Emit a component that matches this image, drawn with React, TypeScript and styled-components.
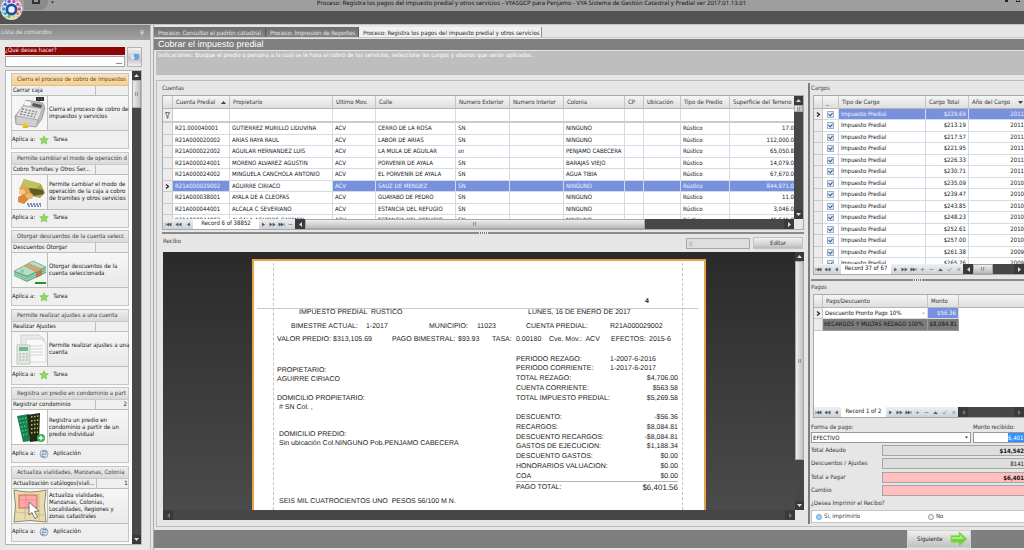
import React from 'react';
import styled, { createGlobalStyle, css } from 'styled-components';

const UI = '"DejaVu Sans Condensed", "DejaVu Sans", sans-serif';
const ARIAL = '"Liberation Sans", Arial, sans-serif';

const GlobalStyle = createGlobalStyle`
  *, *::before, *::after { box-sizing: border-box; }
  body { margin: 0; background: #e6e6e6; font: 6px/8px ${UI}; color: #141414; text-rendering: geometricPrecision; }
  button, input, select { font: inherit; color: inherit; margin: 0; padding: 0; border-radius: 0; }
  h1, h2, h3, p { margin: 0; font-weight: 400; }
  svg { display: block; flex: none; }
`;

/* ---------- window frame ---------- */
const Window = styled.div`
  display: flex; flex-direction: column; height: 100vh; min-height: 550px; overflow: hidden;
`;
const TitleBar = styled.header`
  flex: none; height: 11px; display: flex; align-items: flex-start; background: #9e9e9e; position: relative;
`;
const Orb = styled.div`position: absolute; left: 0; top: -3px; z-index: 2;`;
const QuickAccess = styled.div`
  width: 24px; height: 10px; margin-left: 24px; background: #8a8a8a; border-radius: 0 0 8px 0;
  display: flex; justify-content: center;
`;
const QuickArrow = styled.span`width: 10px; padding: 1px 0 0 3px;`;
const AppTitle = styled.h1`
  flex: 1; text-align: center; font: 6px/6px "Noto Sans", "Open Sans", sans-serif; color: #111; white-space: nowrap;
`;
const WindowButtons = styled.div`
  display: flex; gap: 8px; padding-right: 4px;
`;
const Ribbon = styled.div`flex: none; height: 13px; background: #525252;`;
const Body = styled.div`flex: 1; min-height: 0; display: flex; background: #e6e6e6; border-top: 1px solid #c4c4c4;`;

/* ---------- command dock ---------- */
const Dock = styled.aside`
  flex: none; width: 151px; display: flex; flex-direction: column; border-right: 1px solid #bdbdbd; background: #e8e8e8;
`;
const DockHead = styled.div`
  flex: none; height: 15px; display: flex; align-items: center; justify-content: space-between;
  padding: 0 6px 0 1px; color: #e2e2e2; background: linear-gradient(#858585, #a2a2a2);
`;
const Search = styled.div`flex: none; display: flex; gap: 2px; margin: 7px 8px 3px 5px; height: 20px;`;
const SearchField = styled.label`
  flex: 1; display: flex; flex-direction: column; color: #fff;
`;
const SearchCaption = styled.span`background: #8b0505; height: 8px; line-height: 8px; color: #fbeeee;`;
const SearchLine = styled.span`
  display: flex; flex: 1; margin-top: 1px; border: 1px solid #a6a6a6; background: #fff; align-items: center;
`;
const PlainInput = styled.input`flex: 1; min-width: 0; width: 0; height: 8px; border: 0; background: transparent; outline: 0;`;
const DotsButton = styled.button`border: 0; background: none; width: 10px; line-height: 6px; color: #222; font-weight: 700;`;
const SearchButton = styled.button`
  width: 15px; border: 1px solid #b2b2b2; display: grid; place-items: center;
  background: linear-gradient(#f1f1f1, #c4c4c4 60%, #efefef);
`;
const ListBox = styled.div`
  flex: 1; min-height: 0; display: flex; margin: 0 8px 5px 5px; border: 1px solid #b5b5b5; background: #fafafa;
`;
const CardList = styled.div`
  flex: 1; min-width: 0; display: flex; flex-direction: column; justify-content: space-between; padding: 2px 3px 2px 5px;
`;
const Card = styled.article`
  height: 76px; border: 1px solid #c6c6c6; background: #efefef; display: flex; flex-direction: column;
`;
const CardHead = styled.h3<{ $active?: boolean }>`
  height: 12px; padding-left: 5px; font-size: 6px; line-height: 11px; white-space: nowrap;
  color: ${p => (p.$active ? '#5c4a28' : '#3d3d3d')};
  background: ${p => (p.$active ? 'linear-gradient(#fbe3bd, #f8cf92)' : 'linear-gradient(#eeeeee, #d9d9d9)')};
  border-bottom: 1px solid ${p => (p.$active ? '#dcbf8f' : '#c8c8c8')};
`;
const CardTitle = styled.div`
  height: 10px; display: grid; grid-template-columns: 1fr 33px; line-height: 9px; border-bottom: 1px solid #bdbdbd;
  white-space: nowrap;
  & > span { padding: 0 1px; }
  & > span + span { border-left: 1px solid #bdbdbd; text-align: right; }
`;
const CardBody = styled.div`
  flex: 1; display: grid; grid-template-columns: 36px 1fr; border-bottom: 1px solid #bdbdbd;
  background: linear-gradient(#f6f6f6, #e9e9e9);
`;
const CardIcon = styled.div`border-right: 1px solid #bdbdbd; display: grid; place-items: center; background: #f5f5f5;`;
const CardText = styled.p`align-self: center; padding-left: 1px; line-height: 7px; white-space: pre;`;
const CardFoot = styled.div`height: 17px; display: flex; align-items: center; gap: 4px;`;

/* ---------- scroll bars ---------- */
const Scroll = styled.div<{ $row?: boolean }>`
  flex: none; display: flex; align-items: stretch; justify-content: space-between; background: #474747;
  ${p => p.$row
    ? css`flex: 1; min-width: 0; flex-direction: row;`
    : css`width: 9px; flex-direction: column;`}
`;
const ScrollArrow = styled.button<{ $row?: boolean }>`
  flex: none; border: 0; background: #3a3a3a; display: grid; place-items: center;
  ${p => (p.$row ? 'width: 10px;' : 'height: 9px;')}
`;
const Track = styled.div<{ $row?: boolean }>`
  flex: 1; display: flex; min-height: 0; min-width: 0; flex-direction: ${p => (p.$row ? 'row' : 'column')};
`;
const Thumb = styled.div<{ $row?: boolean; $length: string }>`
  display: grid; place-items: center; border: 1px solid #a8a8a8;
  ${p => p.$row
    ? css`width: ${p.$length}; background: linear-gradient(#ededed, #bcbcbc);`
    : css`height: ${p.$length}; background: linear-gradient(90deg, #ededed, #c0c0c0);`}
`;
const Grip = styled.i`width: 4px; height: 4px; background: repeating-linear-gradient(90deg, #999 0 1px, #c9c9c9 1px 2px);`;

type Dir = 'up' | 'down' | 'left' | 'right';
const ARROWS: Record<Dir, string> = { up: 'M0 4 2.5 1 5 4z', down: 'M0 1h5L2.5 4z', left: 'M4 0v5L1 2.5z', right: 'M1 0v5l3-2.5z' };
const Arrow = ({ dir, fill = '#dcdcdc', size = 5 }: { dir: Dir; fill?: string; size?: number }) => (
  <svg width={size} height={size} viewBox="0 0 5 5"><path d={ARROWS[dir]} fill={fill} /></svg>
);
const VScroll = ({ length }: { length: string }) => (
  <Scroll>
    <ScrollArrow aria-label="Subir"><Arrow dir="up" /></ScrollArrow>
    <Track><Thumb $length={length}><Grip /></Thumb></Track>
    <ScrollArrow aria-label="Bajar"><Arrow dir="down" /></ScrollArrow>
  </Scroll>
);
const HScroll = ({ length, fill }: { length?: string; fill?: string }) => (
  <Scroll $row>
    <ScrollArrow $row aria-label="Izquierda"><Arrow dir="left" fill={fill} /></ScrollArrow>
    <Track $row>{length && <Thumb $row $length={length}><Grip /></Thumb>}</Track>
    <ScrollArrow $row aria-label="Derecha"><Arrow dir="right" fill={fill} /></ScrollArrow>
  </Scroll>
);

/* ---------- workspace ---------- */
const Workspace = styled.main`
  flex: 1; min-width: 0; display: flex; flex-direction: column; margin-left: 2px; border-left: 1px solid #a9a9a9;
  padding-bottom: 2px;
`;
const Tabs = styled.nav`flex: none; display: flex; align-items: flex-end; height: 13px; padding-top: 2px; border-bottom: 1px solid #c9c9c9;`;
const Tab = styled.button<{ $active?: boolean; $w: number }>`
  height: 10px; line-height: 9px; padding: 0 4px; border: 0; border-right: 1px solid #5a5a5a; white-space: nowrap; text-align: left;
  width: ${p => p.$w}px;
  ${p => (p.$active
    ? 'background: #f1f1f1; color: #222; border-right-color: #8f8f8f;'
    : 'background: linear-gradient(#6f6f6f, #868686); color: #e6e6e6;')}
`;
const PageTitle = styled.h2`
  flex: none; height: 11px; margin-top: 1px; padding-left: 4px; background: #808080; color: #fff; font: 9px/11px ${ARIAL};
`;
const Hint = styled.p`
  flex: none; height: 24px; margin: 1px 0 5px 2px; padding: 1px 0 0 2px; background: #bebebe; color: #fff; line-height: 7px;
`;
const Panes = styled.div`
  flex: 1; min-height: 0; display: flex; border: 1px solid #bcbcbc; border-right: 0; margin: 0 0 3px 2px;
`;
const Center = styled.section`flex: 1; min-width: 0; display: flex; flex-direction: column; padding: 2px 4px 6px 5px;`;
const Side = styled.section`
  flex: none; width: 216px; display: flex; flex-direction: column; border-left: 2px solid #7d7d7d; margin: 2px 0; padding-left: 1px; overflow: hidden;
`;
const Caption = styled.h3`flex: none; font-size: 6px; line-height: 12px; color: #3c3c3c;`;
const Splitter = styled.div<{ $top: number; $bottom: number }>`
  flex: none; height: 2px; margin: ${p => p.$top}px 0 ${p => p.$bottom}px; background: #8a8a8a; display: flex; justify-content: center;
  &::after { content: ''; width: 9px; height: 2px; background: repeating-linear-gradient(90deg, #eee 0 1px, #777 1px 2px); }
`;

/* ---------- data grids ---------- */
const GridBox = styled.div`
  flex: none; display: flex; flex-direction: column; border: 1px solid #a9a9a9; background: #fff; overflow: hidden;
`;
const GridMain = styled.div`flex: 1; min-height: 0; display: flex; overflow: hidden;`;
const GridView = styled.div`flex: 1; min-width: 0; overflow: hidden;`;
const Table = styled.table<{ $width: string }>`
  width: ${p => p.$width}; table-layout: fixed; border-collapse: separate; border-spacing: 0;
  th, td { padding: 0 2px; white-space: nowrap; text-align: left; font-weight: 400; line-height: 9px; }
  thead th {
    height: 13px; padding: 0 3px; color: #333; background: linear-gradient(#f5f5f5, #dedede);
    border-right: 1px solid #c4c4c4; border-bottom: 1px solid #b4b4b4;
  }
  tbody td { height: 12px; border-right: 1px solid #d5dbe5; border-bottom: 1px solid #d5dbe5; }
  tbody tr:nth-child(odd) td { height: 11px; }
  tbody td:first-child { padding: 0 2px; background: #ececec; border-color: #c9c9c9; }
  td.num { text-align: right; }
`;
const FilterRow = styled.tr`
  &&&& > td { height: 14px; border-bottom: 2px solid #cbcbcb; }
`;
const Row = styled.tr<{ $selected?: boolean }>`
  ${p => p.$selected && css`
    td:not(:first-child):not(.keep) { background: #7891de; color: #f0f3ff; }
  `}
`;
const SplitHead = styled.span`display: flex; align-items: center; justify-content: space-between;`;
const GridFoot = styled.div`flex: none; height: 10px; display: flex; align-items: stretch; background: #e4e4e4;`;
const NavGroup = styled.div`display: flex; background: linear-gradient(#eef0f2, #ccd3d8);`;
const NavButton = styled.button<{ $w: number }>`
  width: ${p => p.$w}px; border: 0; background: none; display: grid; place-items: center; color: #4c5358;
`;
const RecordText = styled.span<{ $w: number }>`width: ${p => p.$w}px; text-align: center; background: #fff; line-height: 10px; white-space: nowrap;`;
const Corner = styled.div`width: 9px; background: #e6e6e6;`;
const Check = styled.input`
  appearance: none; display: block; width: 7px; height: 7px; border: 1px solid #9db0c4; background: #e3ebf4; position: relative; margin: 0 auto;
  &:checked::after { content: ''; position: absolute; left: 1px; top: 0; width: 3px; height: 4px; border: solid #2c5c9c; border-width: 0 1px 1px 0; transform: rotate(40deg); }
`;

const NAV: Record<string, string> = {
  first: 'M1 1v4M5 1 2 3l3 2zM8 1 5 3l3 2z',
  pprev: 'M4 1 1 3l3 2zM8 1 5 3l3 2z',
  prev: 'M6 1 3 3l3 2z',
  next: 'M3 1l3 2-3 2z',
  nnext: 'M1 1l3 2-3 2zM5 1l3 2-3 2z',
  last: 'M1 1l3 2-3 2zM4 1l3 2-3 2zM8 1v4',
  add: 'M2 3h5M4.5 1v4',
  del: 'M2 3h5',
  edit: 'M2 4.500h5L4.500 2z',
  ok: 'M2 3l2 2 3-4',
  cancel: 'M3 1l4 4M7 1 3 5',
};
const Nav = ({ kind, w }: { kind: string; w: number }) => (
  <NavButton $w={w} aria-label={kind}>
    <svg width="7" height="5" viewBox="0 0 9 6">
      <path d={NAV[kind]} stroke="currentColor" strokeWidth=".6" fill={kind === 'ok' || kind === 'cancel' ? 'none' : 'currentColor'} />
    </svg>
  </NavButton>
);
const NavStrip = ({ kinds, w }: { kinds: string[]; w: number }) => (
  <NavGroup>{kinds.map(k => <Nav key={k} kind={k} w={w} />)}</NavGroup>
);
const Marker = () => (
  <svg width="5" height="5" viewBox="0 0 5 5"><path d="M1 .5 3.500 2.500 1 4.500" fill="none" stroke="#222" strokeWidth="1.200" /></svg>
);

const ACCOUNTS = [
  ['R21.000040001', 'GUTIERREZ MURILLO LIDUVINA', 'CERRO DE LA ROSA', 'SN', 'NINGUNO', '17.0'],
  ['R21A000020002', 'ARIAS RAYA RAUL', 'LABOR DE ARIAS', 'SN', 'NINGUNO', '112,000.0'],
  ['R21A000022002', 'AGUILAR HERNANDEZ LUIS', 'LA MULA DE AGUILAR', 'sn', 'PENJAMO CABECERA', '65,050.8'],
  ['R21A000024001', 'MORENO ALVAREZ AGUSTIN', 'PORVENIR DE AYALA', 'SN', 'BARAJAS VIEJO', '14,079.0'],
  ['R21A000024002', 'MINGUELA CANCHOLA ANTONIO', 'EL PORVENIR DE AYALA', 'SN', 'AGUA TIBIA', '67,670.0'],
  ['R21A000029002', 'AGUIRRE CIRIACO', 'SAUZ DE MENDEZ', 'SN', 'NINGUNO', '844,971.0'],
  ['R21A000038001', 'AYALA DE A CLEOFAS', 'GUAYABO DE PEDRO', 'SN', 'NINGUNO', '11.0'],
  ['R21A000044001', 'ALCALA C SEVERIANO', 'ESTANCIA DEL REFUGIO', 'SN', 'NINGUNO', '3,046.0'],
  ['R21A000044002', 'ALCALA AGUIRRE CARMEN', 'ESTANCIA DEL REFUGIO', 'SN', 'NINGUNO', '45,645.0'],
];
const ACCOUNT_COLS = [10, 57, 103, 43, 80, 54, 54, 61, 19, 37, 49, 66];
const ACCOUNT_HEADS = ['Propietario', 'Ultimo Mov.', 'Calle', 'Numero Exterior', 'Numero Interior', 'Colonia', 'CP', 'Ubicación', 'Tipo de Predio', 'Superficie del Terreno'];

const CHARGES: [string, string][] = [
  ['$229.69', '2011'], ['$213.19', '2011'], ['$217.57', '2011'], ['$221.95', '2011'], ['$226.33', '2011'], ['$230.71', '2011'],
  ['$235.09', '2010'], ['$239.47', '2010'], ['$243.85', '2010'], ['$248.23', '2010'], ['$252.61', '2010'], ['$257.00', '2010'],
  ['$261.38', '2009'], ['$265.76', '2009'],
];
const FULL_NAV = ['next', 'nnext', 'last', 'add', 'del', 'edit', 'ok', 'cancel'];

const AccountArea = styled(GridMain)`flex: none; height: 123px;`;
const AccountTable = styled(Table)`
  th:last-child { border-right: 0; }
  td:last-child { padding-right: 0; border-right: 0; }
`;

const Accounts = () => (
  <GridBox>
    <AccountArea>
      <GridView>
        <AccountTable $width="100%">
          <colgroup>{ACCOUNT_COLS.map((w, i) => <col key={i} width={i === ACCOUNT_COLS.length - 1 ? undefined : w} />)}</colgroup>
          <thead>
            <tr>
              <th />
              <th><SplitHead>Cuenta Predial <Arrow dir="up" fill="#444" /></SplitHead></th>
              {ACCOUNT_HEADS.map(h => <th key={h}>{h}</th>)}
            </tr>
          </thead>
          <tbody>
            <FilterRow>
              <td><svg width="5" height="7" viewBox="0 0 5 7"><path d="M.5.5h4L3 3.500V6H2V3.500z" fill="none" stroke="#555" strokeWidth=".8" /></svg></td>
              {ACCOUNT_COLS.slice(1).map((_, i) => <td key={i} />)}
            </FilterRow>
            {ACCOUNTS.map((a, i) => (
              <Row key={a[0]} $selected={i === 5}>
                <td>{i === 5 && <Marker />}</td>
                <td>{a[0]}</td><td className="keep">{a[1]}</td><td>ACV</td><td>{a[2]}</td><td>{a[3]}</td><td />
                <td>{a[4]}</td><td /><td /><td>Rústico</td><td className="num">{a[5]}</td>
              </Row>
            ))}
          </tbody>
        </AccountTable>
      </GridView>
      <VScroll length="7px" />
    </AccountArea>
    <GridFoot>
      <NavStrip kinds={['first', 'pprev', 'prev']} w={10} />
      <RecordText $w={66}>Record 6 of 38852</RecordText>
      <NavStrip kinds={['next', 'nnext', 'last', 'del']} w={9} />
      <HScroll length="71%" />
      <Corner />
    </GridFoot>
  </GridBox>
);

const SideGrid = styled(GridBox)`margin-left: 2px; border-right: 0;`;
const ChargeArea = styled(GridMain)`flex: none; height: 168px; & > table { flex: none; }`;
const PaymentArea = styled(GridMain)`flex: none; height: 112px; flex-direction: column;`;
const PaymentHead = styled.div`height: 13px; background: linear-gradient(#f3f3f3, #dedede); border-bottom: 1px solid #b4b4b4;`;
const PaymentTable = styled(Table)`
  tbody tr.dark td:not(:first-child) { background: #7c7c7c; color: #111; border-color: #999; padding: 0 1px; }
`;

const Charges = () => (
  <SideGrid>
    <ChargeArea>
      <Table $width="213px">
        <colgroup><col width="9" /><col width="16" /><col width="87" /><col width="43" /><col width="58" /></colgroup>
        <thead><tr><th /><th>_</th><th>Tipo de Cargo</th><th>Cargo Total</th><th><SplitHead>Año del Cargo <Arrow dir="down" fill="#444" /></SplitHead></th></tr></thead>
        <tbody>
          {CHARGES.map((c, i) => (
            <Row key={c[0]} $selected={i === 0}>
              <td>{i === 0 && <Marker />}</td>
              <td className="keep"><Check type="checkbox" defaultChecked aria-label={`Cargo ${c[0]}`} /></td>
              <td>Impuesto Predial</td><td className="num">{c[0]}</td><td className="num">{c[1]}</td>
            </Row>
          ))}
        </tbody>
      </Table>
    </ChargeArea>
    <GridFoot>
      <NavStrip kinds={['first', 'pprev', 'prev']} w={9} />
      <RecordText $w={50}>Record 37 of 67</RecordText>
      <NavStrip kinds={FULL_NAV} w={9} />
      <HScroll length="20px" />
    </GridFoot>
  </SideGrid>
);

const Payments = () => (
  <SideGrid>
    <PaymentArea>
      <PaymentHead>
        <PaymentTable $width="145px">
          <colgroup><col width="9" /><col width="105" /><col width="31" /></colgroup>
          <thead><tr><th /><th>Pago/Descuento</th><th>Monto</th></tr></thead>
          <tbody>
            <Row $selected><td><Marker /></td><td className="keep"><SplitHead>Descuento Pronto Pago 10% <Arrow dir="down" fill="#bbb" size={3} /></SplitHead></td><td className="num">$56.36</td></Row>
            <Row className="dark"><td /><td>RECARGOS Y MULTAS REZAGO 100%</td><td className="num">$8,084.81</td></Row>
          </tbody>
        </PaymentTable>
      </PaymentHead>
    </PaymentArea>
    <GridFoot>
      <NavStrip kinds={['first', 'pprev', 'prev']} w={9} />
      <RecordText $w={45}>Record 1 of 2</RecordText>
      <NavStrip kinds={FULL_NAV} w={9} />
      <HScroll fill="#777" />
    </GridFoot>
  </SideGrid>
);

/* ---------- payment form ---------- */
const PayForm = styled.form`flex: none; display: flex; flex-direction: column; margin-top: 5px; color: #333;`;
const MethodRow = styled.div`display: grid; grid-template-columns: 160px 1fr; gap: 2px; margin-bottom: 2px; white-space: nowrap;`;
const Field = styled.label`display: flex; flex-direction: column; line-height: 9px;`;
const SelectWrap = styled.span`
  position: relative; display: flex;
  & > svg { position: absolute; right: 3px; top: 4px; }
`;
const Select = styled.select`appearance: none; width: 100%; height: 11px; border: 1px solid #999; background: #fff; color: #111; padding: 0 1px;`;
const Received = styled.div`
  height: 11px; border: 1px solid #999; border-right: 0; background: #fff; display: flex; justify-content: flex-end;
`;
const ReceivedInput = styled.input`width: 16px; border: 0; background: #3390ff; color: #fff; line-height: 9px;`;
const TotalRow = styled.label`
  display: grid; grid-template-columns: 71px 1fr; height: 11px; margin-bottom: 2px; align-items: center; white-space: nowrap;
  &:nth-of-type(2) { margin-bottom: 3px; }
`;
const TotalInput = styled.input<{ $pink?: boolean; $bold?: boolean }>`
  width: 100%; height: 11px; border: 1px solid #a5a5a5; border-right: 0; text-align: right; color: #111;
  background: ${p => (p.$pink ? '#ffbfbf' : '#dedede')}; font-weight: ${p => (p.$bold ? 700 : 400)};
`;
const Question = styled.fieldset`border: 0; margin: 0; padding: 0; & > legend { padding: 0; line-height: 12px; }`;
const Options = styled.div`display: grid; grid-template-columns: 112px 1fr; height: 13px; padding-left: 4px; background: #fff; border: 1px solid #c5c5c5; border-right: 0;`;
const Option = styled.label`display: flex; align-items: center; gap: 2px;`;
const Radio = styled.input`
  appearance: none; width: 6px; height: 6px; border: 1px solid #9a9a9a; border-radius: 50%; background: #f2f2f2;
  &:checked { background: #a6d4f5; border-color: #6aa7d6; }
`;

/* ---------- receipt ---------- */
const ReceiptBar = styled.div`
  flex: none; height: 16px; display: flex; justify-content: flex-end; align-items: center; gap: 3px; padding: 0 1px 2px 0;
  & > h3 { flex: 1; align-self: flex-start; padding-left: 1px; line-height: 11px; }
`;
const SmallBox = styled.input`width: 64px; height: 11px; border: 1px solid #a8a8a8; background: #dedede; color: #999; padding: 0 2px;`;
const EditButton = styled.button`
  width: 50px; height: 12px; border: 1px solid #c2c2c2; background: linear-gradient(#f2f2f2, #cfcfcf 70%, #b9b9b9); color: #333;
`;
const Viewer = styled.div`flex: 1; min-height: 0; display: flex; flex-direction: column; margin-left: 1px;`;
const ViewArea = styled.div`flex: 1; min-height: 0; display: flex;`;
const Canvas = styled.div`
  flex: 1; min-width: 0; overflow: hidden; display: flex; justify-content: center; align-items: stretch; padding: 7px 0 0;
  background: linear-gradient(#2a2a2a, #4b4b4b);
`;
const Paper = styled.article`
  width: 454px; border: 2px solid #e7a34a; border-bottom: 0; background: #fff; padding: 2px 21px 0 19px; font: 7px/9px ${ARIAL};
  color: #222; overflow: hidden; display: flex;
`;
const PrintArea = styled.div`flex: 1; border: dashed #c3c3c3; border-width: 0 1px; padding: 0 4px 0 3px; white-space: pre;`;
const Folio = styled.p`font-weight: 700; text-align: right; padding: 34px 29px 0 0; height: 45px;`;
const MarginLine = styled.hr`margin: 0 -20px; border: 0; border-top: 1px solid #c8c8c8;`;
const ReceiptTitle = styled.div`display: grid; grid-template-columns: 229px 1fr; padding-left: 22px; height: 13px; line-height: 8px;`;
const ReceiptLine = styled.div<{ $cols: string; $indent?: number }>`
  display: grid; grid-template-columns: ${p => p.$cols}; padding-left: ${p => p.$indent ?? 0}px; height: 13px; line-height: 10px;
`;
const ReceiptBody = styled.div`display: grid; grid-template-columns: 239px 162px; padding-top: 6px; align-items: start;`;
const Owner = styled.div`display: flex; flex-direction: column;`;
const Block = styled.p<{ $gap: number; $indent?: number }>`margin-top: ${p => p.$gap}px; padding-left: ${p => p.$indent ?? 0}px; line-height: 9px;`;
const Amounts = styled.table`
  border-collapse: separate; border-spacing: 0; width: 162px;
  td { padding: 0; height: 10px; line-height: 9px; vertical-align: middle; }
  tr:nth-child(4n+2) td { height: 9px; }
  td + td { text-align: right; }
  td + td.left { text-align: left; }
  tr.total td { border-top: 1px solid #b5b5b5; height: 11px; }
  tr.total td + td { font-size: 8px; }
`;
const AMOUNTS: [string, string][] = [
  ['PERIODO REZAGO:', '1-2007-6-2016'], ['PERIODO CORRIENTE:', '1-2017-6-2017'], ['TOTAL REZAGO:', '$4,706.00'],
  ['CUENTA CORRIENTE:', '$563.58'], ['TOTAL IMPUESTO PREDIAL:', '$5,269.58'], ['', ''], ['DESCUENTO:', '-$56.36'],
  ['RECARGOS:', '$8,084.81'], ['DESCUENTO RECARGOS:', '-$8,084.81'], ['GASTOS DE EJECUCION:', '$1,188.34'],
  ['DESCUENTO GASTOS:', '$0.00'], ['HONORARIOS VALUACION:', '$0.00'], ['COA', '$0.00'], ['PAGO TOTAL:', '$6,401.56'],
];

const Receipt = () => (
  <Paper>
    <PrintArea>
      <Folio>4</Folio>
      <MarginLine />
      <ReceiptTitle><span>IMPUESTO PREDIAL  RUSTICO</span><span>LUNES, 16 DE ENERO DE 2017</span></ReceiptTitle>
      <ReceiptLine $cols="75px 63px 48px 49px 84px 1fr" $indent={14}>
        <span>BIMESTRE ACTUAL:</span><span>1-2017</span><span>MUNICIPIO:</span><span>11023</span><span>CUENTA PREDIAL:</span><span>R21A000029002</span>
      </ReceiptLine>
      <ReceiptLine $cols="56px 59px 66px 34px 24px 33px 62px 38px 1fr">
        <span>VALOR PREDIO:</span><span>$313,105.69</span><span>PAGO BIMESTRAL:</span><span>$93.93</span><span>TASA:</span><span>0.00180</span><span>Cve. Mov.:  ACV</span><span>EFECTOS:</span><span>2015-6</span>
      </ReceiptLine>
      <ReceiptBody>
        <Owner>
          <Block $gap={12}>{'PROPIETARIO:\nAGUIRRE CIRIACO'}</Block>
          <Block $gap={10}>{'DOMICILIO PROPIETARIO:\n # SN Col. ,'}</Block>
          <Block $gap={18} $indent={2}>{'DOMICILIO PREDIO:\nSin ubicación Col.NINGUNO Pob.PENJAMO CABECERA'}</Block>
          <Block $gap={49} $indent={2}>SEIS MIL CUATROCIENTOS UNO  PESOS 56/100 M.N.</Block>
        </Owner>
        <Amounts>
          <tbody>
            {AMOUNTS.map(([k, v], i) => (
              <tr key={i} className={i === AMOUNTS.length - 1 ? 'total' : undefined}>
                <td width="94">{k}</td><td className={i < 2 ? 'left' : undefined}>{v}</td>
              </tr>
            ))}
          </tbody>
        </Amounts>
      </ReceiptBody>
    </PrintArea>
  </Paper>
);

/* ---------- footer ---------- */
const ActionBar = styled.footer`
  flex: none; height: 18px; background: #7f7f7f; display: flex; justify-content: flex-end; padding-right: 53px;
`;
const NextButton = styled.button`
  width: 64px; border: 1px solid #d2d2d2; background: linear-gradient(#f0f0f0, #d2d2d2 60%, #c0c0c0);
  display: flex; align-items: center; justify-content: space-between; padding: 0 2px 0 9px; color: #222;
`;

/* ---------- drawings ---------- */
const ORB_COLORS = ['#e05050', '#e89030', '#e6d040', '#70c050', '#40b0a0', '#4090e0', '#5060d0', '#9050c0', '#d050a0', '#e05080'];
const OrbIcon = () => (
  <svg width="24" height="24" viewBox="0 0 24 24">
    <circle cx="11.500" cy="12" r="11" fill="#dfe4ee" />
    {ORB_COLORS.map((c, i) => {
      const a = (i / ORB_COLORS.length) * Math.PI * 2;
      return <g key={c}>
        <circle cx={11.5 + Math.cos(a) * 7.8} cy={12 + Math.sin(a) * 7.8} r="1.700" fill={c} />
        <circle cx={11.5 + Math.cos(a + .3) * 9.8} cy={12 + Math.sin(a + .3) * 9.8} r=".8" fill={c} />
      </g>;
    })}
    <circle cx="11.500" cy="12.500" r="4.600" fill="#eef4ff" stroke="#1c4fa8" strokeWidth="2.800" />
  </svg>
);
const StarIcon = () => (
  <svg width="10" height="10" viewBox="0 0 10 10"><path d="M5 .8 6.200 3.600 9.300 3.800 7 5.900 7.800 9 5 7.400 2.200 9 3 5.900.7 3.800 3.800 3.600z" fill="#8edc5a" stroke="#62b23a" strokeWidth=".5" /></svg>
);
const AppIcon = () => (
  <svg width="10" height="10" viewBox="0 0 10 10"><circle cx="5" cy="5" r="4" fill="#e4ebf3" stroke="#8396ae" strokeWidth=".8" /><rect x="4" y="2.500" width="3" height="3" fill="none" stroke="#5d7ba3" strokeWidth=".7" /><path d="M3 4.500v3h3" fill="none" stroke="#5d7ba3" strokeWidth=".7" /></svg>
);
const RegisterIcon = () => (
  <svg width="34" height="34" viewBox="0 0 34 34">
    <path d="M26 6V4" stroke="#777" fill="none" /><rect x="23" y="1" width="8" height="4" fill="#303030" /><path d="M25 3h1m2 0h1" stroke="#d09040" />
    <path d="M10 10 13 4l17 3 2 5-3 11-6 8-20-3-1-8z" fill="#b9b9b9" stroke="#8a8a8a" strokeWidth=".6" />
    <path d="M10 10 29 13 25 24 3 20z" fill="#e2e2e2" stroke="#999" strokeWidth=".4" />
    <path d="M3 20 25 24 23 31 3 28z" fill="#cfcfcf" stroke="#8e8e8e" strokeWidth=".5" />
    <path d="M20 7l9 2-1 3-9-2z" fill="#555" /><path d="M12 5l6 1-1 4-6-1z" fill="#f7f7f7" />
    <path d="M9 13l15 3M8 15.500l15 3M7 18l15 3" stroke="#828282" strokeWidth="1.300" strokeDasharray="2 1.500" />
    <circle cx="12" cy="29" r="2.500" fill="#f2cc2c" /><rect x="10" y="30" width="5" height="2" fill="#e4b91c" />
  </svg>
);
const FoldersIcon = () => (
  <svg width="34" height="34" viewBox="0 0 34 34">
    <path d="M11 4 28 9l4 9-5 5-16-4-4-6z" fill="#a8a544" /><path d="M11 4 28 9l-4 4L8 13z" fill="#c3c060" /><path d="M16 13l14 2 1 4-12 2z" fill="#5f5a26" />
    <path d="M6 13l7-2 4 6-6 6z" fill="#e9a253" /><circle cx="9" cy="17" r="3" fill="#f2c485" /><path d="M5 22l6-3 5 5-5 5-6-2z" fill="#d98a3c" /><circle cx="17" cy="21" r="3" fill="#f0b467" />
    <path d="M14 29h15M15 31h13" stroke="#5e69a8" strokeWidth="1.300" strokeDasharray="2 1" />
  </svg>
);
const MoneyIcon = () => (
  <svg width="34" height="34" viewBox="0 0 34 34">
    <path d="M1 18 20 8l13 6v6L14 29 1 23z" fill="#68b18a" /><path d="M1 18 20 8l13 6-19 9z" fill="#b8dfc6" stroke="#5ba27c" strokeWidth=".6" />
    <path d="M1 20l13 5 19-9M1 22l13 5 19-9" stroke="#d6eee0" strokeWidth=".6" fill="none" />
    <path d="M11 13l5-2.500 13 5.500v6l-6 3v-6z" fill="#a9844f" /><path d="M11 13l5-2.500 13 5.500-6 3z" fill="#caa873" />
    <circle cx="9" cy="18" r="2" fill="#8fc9a6" /><rect x="22" y="29" width="11" height="2" fill="#1f9a1f" />
  </svg>
);
const SheetsIcon = () => (
  <svg width="34" height="34" viewBox="0 0 34 34">
    <path d="M8 3h18l5 4v22H8z" fill="#e9e9e9" stroke="#bfbfbf" strokeWidth=".6" /><path d="M13 7h15l5 4v19H13z" fill="#f9f9f9" stroke="#c2c2c2" strokeWidth=".6" />
    <path d="M18 14h12M18 17h12M18 20h12M18 23h12" stroke="#ccc" strokeWidth=".8" />
    <rect x="4" y="13" width="13" height="19" fill="#e3e9e5" stroke="#9dada3" strokeWidth=".6" /><rect x="6" y="15" width="9" height="4" fill="#74b792" />
    <path d="M6 22h9M6 25h9M6 28h9" stroke="#b9a0a0" strokeWidth="1.200" strokeDasharray="2 1.500" />
  </svg>
);
const BuildingsIcon = () => (
  <svg width="34" height="34" viewBox="0 0 34 34">
    <rect width="34" height="34" fill="#fff" /><path d="M4 6 16 4l1 27-7 1z" fill="#17814f" /><path d="M14 5l13-2-1 28-9 1z" fill="#232a1a" />
    <path d="M6 9l8-1M7 13l7-1M8 17l6-1M9 21l5-1M10 25l4-1" stroke="#5cc98f" strokeWidth="1.300" strokeDasharray="1.500 1.500" />
    <path d="M18 7l8-1M18 11l8-1M18 15l7-1M18 19l7-1M18 23l7-1" stroke="#d6c04a" strokeWidth="1.500" strokeDasharray="1.500 1.500" />
    <circle cx="28" cy="28" r="4" fill="#2fae3b" /><path d="M28 25.500v5M25.500 28h5" stroke="#fff" strokeWidth="1.400" />
  </svg>
);
const MapIcon = () => (
  <svg width="34" height="34" viewBox="0 0 34 34">
    <path d="M1 1q16 4 32 0-3 16 0 32-16-3-32 0 3-16 0-32z" fill="#e6dcae" stroke="#7b7050" strokeWidth=".8" />
    <path d="M3 23l28 3M12 4v27M26 4v27" stroke="#c6b980" strokeWidth=".8" /><rect x="6" y="6" width="18" height="13" fill="#fba9a9" stroke="#e24848" strokeWidth=".8" />
    <path d="M6 11h18M13 6v13" stroke="#e88080" strokeWidth=".7" /><path d="M16 13v13l3-2.500 3 6 2.500-1.500-3-5.500 4.500-.5z" fill="#fff" stroke="#444" strokeWidth=".7" />
  </svg>
);
const NextArrow = () => (
  <svg width="18" height="16" viewBox="0 0 18 16"><path d="M1 4.500h8V.8L17 8l-8 7.200v-3.700H1z" fill="#74d23c" stroke="#8fd868" strokeWidth=".6" /><path d="M2 6h8V3.500l4 4.500H2z" fill="#a5ee72" /></svg>
);

const COMMANDS = [
  { tip: 'Cierra el proceso de cobro de impuestos', title: 'Cerrar caja', n: '', text: 'Cierra el proceso de cobro de\nimpuestos y servicios', Icon: RegisterIcon, app: false },
  { tip: 'Permite cambiar el modo de operación d', title: 'Cobro Tramites y Otros Ser...', n: '', text: 'Permite cambiar el modo de\noperación de la caja a cobro\nde tramites y otros servicios', Icon: FoldersIcon, app: false },
  { tip: 'Otorgar descuentos de la cuenta selecc', title: 'Descuentos Otorgar', n: '', text: 'Otorgar descuentos de la\ncuenta seleccionada', Icon: MoneyIcon, app: false },
  { tip: 'Permite realizar ajustes a una cuenta', title: 'Realizar Ajustes', n: '', text: 'Permite realizar ajustes a una\ncuenta', Icon: SheetsIcon, app: false },
  { tip: 'Registra un predio en condominio a part', title: 'Registrar condominio', n: '2', text: 'Registra un predio en\ncondominio a partir de un\npredio individual', Icon: BuildingsIcon, app: true },
  { tip: 'Actualiza vialidades, Manzanas, Colonia', title: 'Actualización catálogos(viali...', n: '1', text: 'Actualiza vialidades,\nManzanas, Colonias,\nLocalidades, Regiones y\nzonas catastrales', Icon: MapIcon, app: true },
];

const CommandDock = () => (
  <Dock>
    <DockHead>
      <span>Lista de comandos</span>
      <svg width="4" height="6" viewBox="0 0 4 6"><path d="M1 0h2v3H1zM0 3h4M2 3v3" stroke="#ddd" strokeWidth=".7" fill="none" /></svg>
    </DockHead>
    <Search>
      <SearchField>
        <SearchCaption>¿Qué desea hacer?</SearchCaption>
        <SearchLine><PlainInput aria-label="¿Qué desea hacer?" /><DotsButton>...</DotsButton></SearchLine>
      </SearchField>
      <SearchButton aria-label="Buscar">
        <svg width="10" height="10" viewBox="0 0 10 10"><circle cx="4.500" cy="5" r="3.500" fill="#b7d3ee" /><path d="M4 2h5v4l-1.500 2H4z" fill="#6f9fd3" /><path d="M1 4h3M1 6h4" stroke="#eef6ff" /></svg>
      </SearchButton>
    </Search>
    <ListBox>
      <CardList>
        {COMMANDS.map(({ tip, title, n, text, Icon, app }, i) => (
          <Card key={title}>
            <CardHead $active={i === 0}>{tip}</CardHead>
            <CardTitle><span>{title}</span><span>{n}</span></CardTitle>
            <CardBody><CardIcon><Icon /></CardIcon><CardText>{text}</CardText></CardBody>
            <CardFoot><span>Aplica a:</span>{app ? <AppIcon /> : <StarIcon />}<span>{app ? 'Aplicación' : 'Tarea'}</span></CardFoot>
          </Card>
        ))}
      </CardList>
      <VScroll length="28px" />
    </ListBox>
  </Dock>
);

export default function App() {
  return (
    <Window>
      <GlobalStyle />
      <TitleBar>
        <Orb><OrbIcon /></Orb>
        <QuickAccess><svg width="8" height="5" viewBox="0 0 8 5"><path d="M0 0h8v4H0z" fill="#333" /><path d="M2 0h4v2H2z" fill="#999" /></svg></QuickAccess>
        <QuickArrow><Arrow dir="down" fill="#222" size={3} /></QuickArrow>
        <AppTitle>Proceso: Registra los pagos del impuesto predial y otros servicios - VYASGCP para Penjamo - VYA Sistema de Gestión Catastral y Predial ver 2017.01.13.01</AppTitle>
        <WindowButtons>
          <svg width="3" height="2" viewBox="0 0 3 2"><path d="M0 0h3v2H0z" fill="#222" /></svg>
          <svg width="4" height="2" viewBox="0 0 4 2"><path d="M0 0v1.500h4V0" fill="none" stroke="#222" /></svg>
        </WindowButtons>
      </TitleBar>
      <Ribbon />
      <Body>
        <CommandDock />
        <Workspace>
          <Tabs>
            <Tab $w={112}>Proceso: Consultar el padrón catastral</Tab>
            <Tab $w={93}>Proceso: Impresión de Reportes</Tab>
            <Tab $active $w={183}>Proceso: Registra los pagos del impuesto predial y otros servicios</Tab>
          </Tabs>
          <PageTitle>Cobrar el impuesto predial</PageTitle>
          <Hint>Indicaciones: Busque el predio o persona a la cuál se le hara el cobró de los servicios, seleccione los cargos y abonos que serán aplicados.</Hint>
          <Panes>
            <Center>
              <Caption>Cuentas</Caption>
              <Accounts />
              <Splitter $top={2} $bottom={2} />
              <ReceiptBar>
                <Caption>Recibo</Caption>
                <SmallBox aria-label="Página" defaultValue="0" />
                <EditButton>Editar</EditButton>
              </ReceiptBar>
              <Viewer>
                <ViewArea><Canvas><Receipt /></Canvas><VScroll length="83%" /></ViewArea>
                <GridFoot><HScroll fill="#777" /><Corner /></GridFoot>
              </Viewer>
            </Center>
            <Side>
              <Caption>Cargos</Caption>
              <Charges />
              <Splitter $top={4} $bottom={1} />
              <Caption>Pagos</Caption>
              <Payments />
              <PayForm>
                <MethodRow>
                  <Field>Forma de pago:
                    <SelectWrap><Select defaultValue="EFECTIVO"><option>EFECTIVO</option></Select><Arrow dir="down" fill="#333" size={3} /></SelectWrap>
                  </Field>
                  <Field>Monto recibido:<Received><ReceivedInput defaultValue="6,401" /></Received></Field>
                </MethodRow>
                <TotalRow>Total Adeudo<TotalInput $bold readOnly value="$14,542" /></TotalRow>
                <TotalRow>Descuentos / Ajustes<TotalInput readOnly value="8141" /></TotalRow>
                <TotalRow>Total a Pagar<TotalInput $pink $bold readOnly value="$6,401" /></TotalRow>
                <TotalRow>Cambio<TotalInput $pink readOnly value="" /></TotalRow>
                <Question>
                  <legend>¿Desea Imprimir el Recibo?</legend>
                  <Options>
                    <Option><Radio type="radio" name="print" defaultChecked />Si, imprimirlo</Option>
                    <Option><Radio type="radio" name="print" />No</Option>
                  </Options>
                </Question>
              </PayForm>
            </Side>
          </Panes>
          <ActionBar><NextButton>Siguiente <NextArrow /></NextButton></ActionBar>
        </Workspace>
      </Body>
    </Window>
  );
}
